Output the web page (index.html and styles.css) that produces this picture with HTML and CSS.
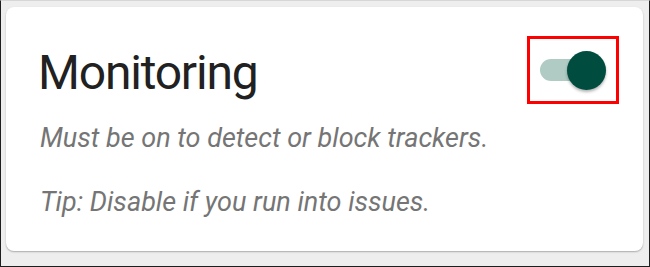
FILE: index.html
```html
<!DOCTYPE html>
<html>
<head>
<meta charset="utf-8">
<link rel="stylesheet" href="styles.css">
</head>
<body>
<div class="frame">
  <div class="card">
    <div class="header">
      <h1 class="title">Monitoring</h1>
      <div class="highlight">
        <div class="switch">
          <div class="track"></div>
          <div class="knob"></div>
        </div>
      </div>
    </div>
    <p class="desc">Must be on to detect or block trackers.</p>
    <p class="desc tip">Tip: Disable if you run into issues.</p>
  </div>
</div>
</body>
</html>
```

FILE: styles.css
```css
html, body {
  margin: 0;
  padding: 0;
}
body {
  width: 650px;
  height: 267px;
  overflow: hidden;
  font-family: Roboto, "Liberation Sans", sans-serif;
}
.frame {
  box-sizing: border-box;
  width: 650px;
  height: 267px;
  background: #eeeeee;
  border-left: 1px solid #1e1e1e;
  border-right: 1px solid #1e1e1e;
  border-bottom: 1px solid #1e1e1e;
  border-top: 1px solid #d6d6d6;
  padding: 6px 6px 0 5px;
}
.card {
  box-sizing: border-box;
  height: 244px;
  background: #ffffff;
  border-radius: 8px;
  box-shadow: 0 1px 2px rgba(0,0,0,0.22), 0 1px 1px rgba(0,0,0,0.08);
  padding: 29px 24px 0 32px;
}
.header {
  display: flex;
  justify-content: space-between;
  align-items: flex-start;
}
.title {
  margin: 0;
  font-weight: 400;
  font-size: 48px;
  line-height: 56px;
  letter-spacing: -1.2px;
  color: #212121;
  padding-top: 9px;
}
.highlight {
  box-sizing: border-box;
  width: 92px;
  height: 68px;
  border: 3px solid #ff0000;
  display: flex;
  align-items: center;
  justify-content: center;
}
.switch {
  position: relative;
  width: 66px;
  height: 39px;
}
.track {
  position: absolute;
  left: 0;
  top: 8px;
  width: 54px;
  height: 22px;
  border-radius: 11px;
  background: #b0cbc4;
}
.knob {
  position: absolute;
  right: 0;
  top: 0;
  width: 39px;
  height: 39px;
  border-radius: 50%;
  background: #004d40;
  box-shadow: 0 2px 3px rgba(0,0,0,0.3);
}
.desc {
  margin: 18px 0 0 2px;
  font-style: italic;
  font-size: 27px;
  line-height: 32px;
  color: #757575;
}
.tip {
  margin-top: 32px;
}
```
